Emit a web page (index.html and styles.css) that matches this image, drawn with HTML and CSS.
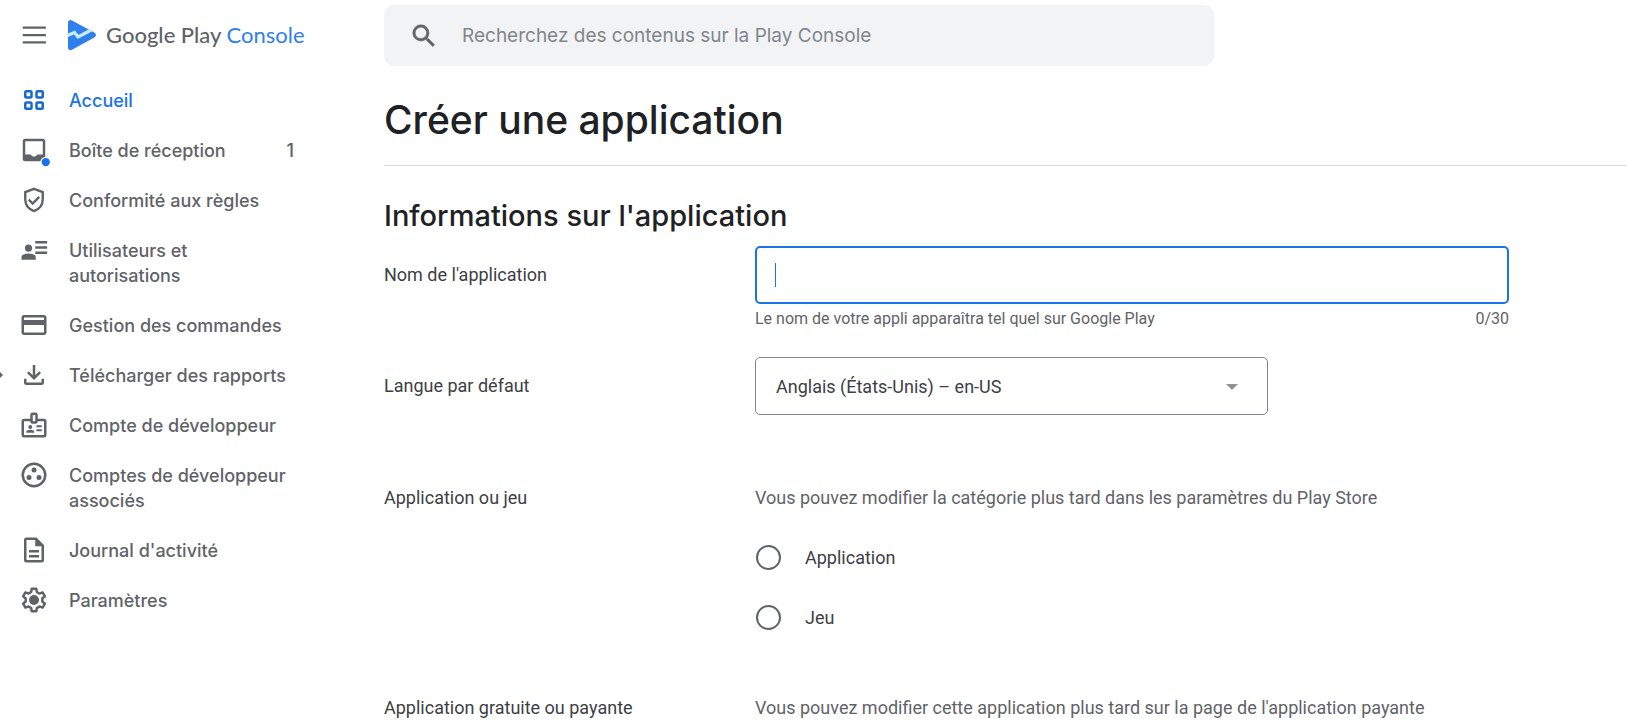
FILE: index.html
```html
<!DOCTYPE html>
<html lang="fr">
<head>
<meta charset="utf-8">
<meta name="viewport" content="width=device-width, initial-scale=1">
<title>Créer une application – Google Play Console</title>
<link rel="stylesheet" href="styles.css">
</head>
<body>
<div class="page">
  <aside class="sidebar">
    <div class="brand">
      <button class="menu-button" type="button" aria-label="Menu">
        <svg class="icon" viewBox="0 0 24 24"><path d="M3 5.200h18.500v1.800H3zM3 11.100h18.500v1.800H3zM3 17h18.500v1.800H3z"/></svg>
      </button>
      <a class="brand-link" href="#">
        <svg class="brand-logo" viewBox="0 0 30 32">
          <defs><clipPath id="play"><path d="M1 3.500C1 1 3.200.3 5 1.400L27.300 13.600c2.300 1.300 2.300 3.500 0 4.800L5 30.700C3.200 31.700 1 31 1 28.500z"/></clipPath></defs>
          <g clip-path="url(#play)">
            <path fill="#2f80ed" d="M0 0h30v32H0z"/>
            <path fill="none" stroke="#c4edff" stroke-width="3.200" d="M0 16.800L7.500 13.500L11 18L27 9.500"/>
          </g>
        </svg>
        <span class="brand-name">Google Play <span class="brand-accent">Console</span></span>
      </a>
    </div>
    <nav class="nav">
      <a class="nav-item nav-item-active" href="#">
        <svg class="icon" viewBox="0 0 24 24"><g fill="none" stroke="currentColor" stroke-width="2"><rect x="5" y="5" width="5" height="5" rx="1"/><rect x="14" y="5" width="5" height="5" rx="1"/><rect x="5" y="14" width="5" height="5" rx="1"/><rect x="14" y="14" width="5" height="5" rx="1"/></g></svg>
        <span class="nav-label">Accueil</span>
      </a>
      <a class="nav-item" href="#">
        <svg class="icon" viewBox="0 0 24 24"><path fill-rule="evenodd" d="M5 3h14a2 2 0 0 1 2 2v14a2 2 0 0 1-2 2H5a2 2 0 0 1-2-2V5a2 2 0 0 1 2-2zM5 5v10.500h4.500c.5 1.100 1.300 1.700 2.500 1.700s2-.6 2.500-1.700H19V5z"/><circle cx="21.400" cy="21.600" r="4.300" fill="#fff"/><circle cx="21.400" cy="21.600" r="3.300" fill="#1a73e8"/></svg>
        <span class="nav-label">Boîte de réception</span>
        <span class="nav-count">1</span>
      </a>
      <a class="nav-item" href="#">
        <svg class="icon" viewBox="0 0 24 24"><path fill="none" stroke="currentColor" stroke-width="1.900" d="M12 3.100l7 2.600v5.500c0 4.600-2.800 8.200-7 9.700-4.200-1.500-7-5.100-7-9.700V5.700z"/><path fill="none" stroke="currentColor" stroke-width="1.900" d="M7.800 11.700l3.100 3.100 5.300-5.300"/></svg>
        <span class="nav-label">Conformité aux règles</span>
      </a>
      <a class="nav-item" href="#">
        <svg class="icon" viewBox="0 0 24 24"><circle cx="7.600" cy="10.400" r="2.900"/><path d="M2 19.700v-2c0-2 2.500-3 5.700-3s5.700 1 5.700 3v2zM13 4.700h9.500v2H13zM13 8.900h9.500v2H13zM13 13.100h9.500v2H13z"/></svg>
        <span class="nav-label">Utilisateurs et autorisations</span>
      </a>
      <a class="nav-item" href="#">
        <svg class="icon" viewBox="0 0 24 24"><path d="M20 4H4c-1.110 0-1.990.89-1.990 2L2 18c0 1.110.89 2 2 2h16c1.110 0 2-.89 2-2V6c0-1.110-.89-2-2-2zm0 14H4v-6h16v6zm0-10H4V6h16v2z"/></svg>
        <span class="nav-label">Gestion des commandes</span>
      </a>
      <a class="nav-item" href="#">
        <svg class="nav-expand" viewBox="0 0 3 6"><path d="M0 0l3 3-3 3z"/></svg>
        <svg class="icon" viewBox="0 0 24 24"><path d="M12 16l-5.600-5.600L7.800 9l3.200 3.200V4h2v8.200L16.200 9l1.400 1.400zM6 20a2 2 0 0 1-2-2v-3h2v3h12v-3h2v3a2 2 0 0 1-2 2z"/></svg>
        <span class="nav-label">Télécharger des rapports</span>
      </a>
      <a class="nav-item" href="#">
        <svg class="icon" viewBox="0 0 24 24"><path fill-rule="evenodd" d="M20 7h-5V4a2 2 0 0 0-2-2h-2a2 2 0 0 0-2 2v3H4a2 2 0 0 0-2 2v11a2 2 0 0 0 2 2h16a2 2 0 0 0 2-2V9a2 2 0 0 0-2-2zm-9-3h2v5h-2zm9 16H4V9h5a2 2 0 0 0 2 2h2a2 2 0 0 0 2-2h5z"/><circle cx="9" cy="13.500" r="1.600"/><path d="M5.800 18.200v-.6c0-1.200 1.500-1.800 3.200-1.800s3.200.6 3.200 1.800v.6zM14 12.200h4.200v1.500H14zM14 15.400h4.200v1.500H14z"/></svg>
        <span class="nav-label">Compte de développeur</span>
      </a>
      <a class="nav-item" href="#">
        <svg class="icon" viewBox="0 0 24 24"><circle cx="12" cy="12" r="9" fill="none" stroke="currentColor" stroke-width="2"/><circle cx="12" cy="8" r="2"/><circle cx="8" cy="14" r="2"/><circle cx="16" cy="14" r="2"/></svg>
        <span class="nav-label">Comptes de développeur associés</span>
      </a>
      <a class="nav-item" href="#">
        <svg class="icon" viewBox="0 0 24 24"><path fill-rule="evenodd" d="M14 2H6a2 2 0 0 0-2 2v16a2 2 0 0 0 2 2h12a2 2 0 0 0 2-2V8zM6 4h7v5h5v11H6z"/><path d="M8 12h8v2H8zM8 16h8v2H8z"/></svg>
        <span class="nav-label">Journal d'activité</span>
      </a>
      <a class="nav-item" href="#">
        <svg class="icon" viewBox="0 0 24 24"><g transform="translate(12 12)"><path fill="none" stroke="currentColor" stroke-width="2" stroke-linejoin="round" d="M-2.300-6.300L-1.800-9H1.800L2.300-6.300Q3.400-5.900 4.310-5.140L6.890-6.060L8.690-2.940L6.610-1.160Q6.800 0 6.610 1.160L8.690 2.940L6.890 6.060L4.310 5.140Q3.400 5.900 2.300 6.300L1.800 9H-1.800L-2.300 6.300Q-3.400 5.900-4.310 5.140L-6.890 6.060L-8.690 2.940L-6.610 1.160Q-6.800 0-6.610-1.160L-8.690-2.940L-6.890-6.060L-4.310-5.140Q-3.400-5.900-2.300-6.300z"/><circle r="4"/></g></svg>
        <span class="nav-label">Paramètres</span>
      </a>
    </nav>
  </aside>

  <main class="main">
    <div class="search" role="search">
      <svg class="icon" viewBox="0 0 24 24"><path stroke="currentColor" stroke-width=".4" d="M15.500 14h-.79l-.28-.27A6.471 6.471 0 0 0 16 9.500 6.500 6.500 0 1 0 9.500 16c1.610 0 3.090-.59 4.230-1.570l.27.28v.79l5 4.990L20.490 19l-4.990-5zm-6 0C7.010 14 5 11.990 5 9.500S7.010 5 9.500 5 14 7.010 14 9.500 11.990 14 9.500 14z"/></svg>
      <input class="search-input" type="search" aria-label="Recherche" placeholder="Recherchez des contenus sur la Play Console">
    </div>
    <h1 class="title">Créer une application</h1>
    <form class="form">
      <h2 class="section-title">Informations sur l'application</h2>
      <div class="row">
        <label class="row-label row-label-box" for="app-name">Nom de l'application</label>
        <div class="row-body">
          <div class="text-field">
            <input class="box text-input" id="app-name" type="text" maxlength="30" aria-describedby="app-name-help">
            <span class="caret"></span>
          </div>
          <div class="helper">
            <span id="app-name-help">Le nom de votre appli apparaîtra tel quel sur Google Play</span>
            <span>0/30</span>
          </div>
        </div>
      </div>
      <div class="row row-language">
        <label class="row-label row-label-box" for="language">Langue par défaut</label>
        <div class="select-field">
          <select class="box select" id="language"><option>Anglais (États-Unis) – en-US</option></select>
          <svg class="select-arrow" viewBox="0 0 12 6"><path d="M0 0h12L6 6z"/></svg>
        </div>
      </div>
      <div class="row row-choice" role="radiogroup" aria-labelledby="kind">
        <span class="row-label" id="kind">Application ou jeu</span>
        <div class="row-body">
          <p class="description">Vous pouvez modifier la catégorie plus tard dans les paramètres du Play Store</p>
          <div class="choices">
            <label class="choice"><input class="radio" type="radio" name="kind">Application</label>
            <label class="choice"><input class="radio" type="radio" name="kind">Jeu</label>
          </div>
        </div>
      </div>
      <div class="row">
        <span class="row-label">Application gratuite ou payante</span>
        <p class="description">Vous pouvez modifier cette application plus tard sur la page de l'application payante</p>
      </div>
    </form>
  </main>
</div>
</body>
</html>
```
FILE: styles.css
```css
* {
  box-sizing: border-box;
}

body {
  margin: 0;
  background: #fff;
  color: #3c4043;
  font-family: Roboto, "Liberation Sans", sans-serif;
  font-size: 18px;
  line-height: 25px;
}

.page {
  display: flex;
}

.icon {
  flex: none;
  display: block;
  width: 30px;
  height: 30px;
  overflow: visible;
  fill: currentColor;
}

/* Sidebar */
.sidebar {
  flex: none;
  width: 384px;
  color: #5f6368;
  font-family: Inter, "Open Sans", sans-serif;
}

.brand {
  display: flex;
  align-items: center;
  gap: 18px;
  height: 70px;
  padding-left: 19px;
}

.menu-button {
  padding: 0;
  border: 0;
  background: none;
  color: inherit;
}

.brand-link {
  display: flex;
  align-items: center;
  gap: 9px;
  color: inherit;
  text-decoration: none;
}

.brand-logo {
  width: 30px;
  height: 32px;
}

.brand-name {
  font-family: Lato, "Open Sans", sans-serif;
  font-size: 22px;
  font-weight: 500;
  line-height: 32px;
}

.brand-accent {
  color: #2f80ed;
  font-weight: 400;
}

.nav {
  padding-top: 5px;
}

.nav-item {
  position: relative;
  display: flex;
  align-items: flex-start;
  gap: 20px;
  padding: 13px 90px 12px 19px;
  color: inherit;
  font-weight: 450;
  text-decoration: none;
}

.nav-item .icon {
  margin: -3px 0 -2px;
}

.nav-item-active {
  color: #1967d2;
}

.nav-label {
  flex: 1;
}

.nav-item-active .nav-label {
  color: #1a73e8;
}

.nav-expand {
  position: absolute;
  left: 0;
  top: 22px;
  width: 3px;
  height: 6px;
  fill: currentColor;
}

/* Main column */
.main {
  flex: 1;
  min-width: 0;
  padding-top: 5px;
}

.search {
  display: flex;
  align-items: center;
  gap: 23px;
  max-width: 830px;
  height: 61px;
  padding: 0 25px;
  border-radius: 10px;
  background: #f1f3f4;
  color: #5f6368;
}

.search-input {
  flex: 1;
  min-width: 0;
  padding: 0;
  border: 0;
  outline: 0;
  background: none;
  font: 19px/28px Inter, "Open Sans", sans-serif;
}

.search-input::placeholder {
  color: #80868b;
}

.title {
  margin: 29px 0 0;
  padding-bottom: 20px;
  border-bottom: 1px solid #dadce0;
  color: #202124;
  font: 500 39px/50px Inter, "Open Sans", sans-serif;
}

.section-title {
  margin: 30px 0 10px;
  color: #202124;
  font: 500 29px/40px Inter, "Open Sans", sans-serif;
}

.row {
  display: grid;
  grid-template-columns: 371px minmax(0, 754px);
}

.row-language {
  margin: 28px 0 70px;
}

.row-choice {
  margin-bottom: 65px;
}

.row-label-box {
  padding-top: 16px;
}

.box {
  display: block;
  width: 100%;
  height: 58px;
  padding: 0 20px;
  border: 1px solid #80868b;
  border-radius: 5px;
  outline: 0;
  background: #fff;
  color: #3c4043;
  font: inherit;
}

.text-field,
.select-field {
  position: relative;
}

.text-input {
  border: 2px solid #1a73e8;
}

.caret {
  position: absolute;
  left: 20px;
  top: 17px;
  width: 1px;
  height: 24px;
  background: #1a73e8;
}

.helper {
  display: flex;
  justify-content: space-between;
  padding-top: 4px;
  color: #5f6368;
  font-size: 16px;
  line-height: 21px;
}

.select-field {
  max-width: 513px;
}

.select {
  appearance: none;
}

.select-arrow {
  position: absolute;
  right: 30px;
  top: 27px;
  width: 12px;
  height: 6px;
  fill: #909295;
  pointer-events: none;
}

.description {
  margin: 0;
  color: #5f6368;
}

.choices {
  display: grid;
  gap: 35px;
  padding-top: 35px;
}

.choice {
  display: flex;
  align-items: center;
  gap: 24px;
}

.radio {
  appearance: none;
  width: 25px;
  height: 25px;
  margin: 0 0 0 1px;
  border: 2px solid #5f6368;
  border-radius: 50%;
}

.radio:checked {
  border-color: #1a73e8;
  background: radial-gradient(#1a73e8 6px, transparent 7px);
}
```
